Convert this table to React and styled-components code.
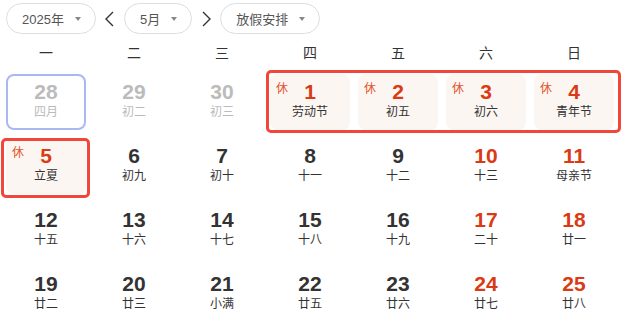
import React from "react"
import styled, { createGlobalStyle } from "styled-components"

const GlobalStyle = createGlobalStyle`
  body {
    margin: 0;
    background: #fff;
    font-family: "Liberation Sans", "Noto Sans CJK SC", sans-serif;
    color: #333;
  }
`

const Page = styled.div`
  width: 626px;
  height: 321px;
  overflow: hidden;
`

const Toolbar = styled.div`
  display: flex;
  align-items: center;
  gap: 7px;
  height: 31px;
  padding: 3px 0 0 6px;
`

const Pill = styled.button`
  display: flex;
  align-items: center;
  gap: 11px;
  height: 31px;
  padding: 0 14px 0 15px;
  border: 1px solid #dedede;
  border-radius: 16px;
  background: #fff;
  color: #555;
  font-family: inherit;
  font-size: 13px;
  cursor: pointer;
`

const Caret = styled.span`
  width: 0;
  height: 0;
  border-left: 3.5px solid transparent;
  border-right: 3.5px solid transparent;
  border-top: 4px solid #888;
`

const Arrow = styled.button`
  display: flex;
  align-items: center;
  justify-content: center;
  width: 14px;
  height: 31px;
  padding: 0;
  border: 0 none;
  background: none;
  cursor: pointer;
`

const WeekHeader = styled.div`
  display: grid;
  grid-template-columns: repeat(7, 88px);
  align-content: start;
  padding: 6px 0 0 2px;
  height: 36px;
  box-sizing: border-box;
  font-size: 14px;
  line-height: 26px;
  text-align: center;
  color: #333;
`

const WeekRow = styled.div`
  display: grid;
  grid-template-columns: repeat(7, 88px);
  padding-left: 2px;
`

const HolidayRun = styled.div`
  grid-column: span ${(p) => p.$span};
  display: grid;
  grid-template-columns: repeat(${(p) => p.$span}, 88px);
  position: relative;

  &::after {
    content: "";
    position: absolute;
    top: ${(p) => p.$inset[0]}px;
    right: ${(p) => p.$inset[1]}px;
    bottom: ${(p) => p.$inset[2]}px;
    left: ${(p) => p.$inset[3]}px;
    border: 3px solid #f1473b;
    border-radius: 5px;
    pointer-events: none;
  }
`

const Cell = styled.div`
  width: 88px;
  height: 64px;
  padding: 4px;
  box-sizing: border-box;
`

const CellBox = styled.div`
  position: relative;
  height: 100%;
  box-sizing: border-box;
  display: flex;
  flex-direction: column;
  align-items: center;
  padding-top: 4px;
  border-radius: 8px;
  border: 2px solid ${(p) => (p.$selected ? "#aab8f2" : "transparent")};
  background: ${(p) => (p.$off ? "#fcf6f2" : "transparent")};
`

const DayNum = styled.div`
  font-size: 21px;
  font-weight: 700;
  line-height: 24px;
  color: ${(p) => (p.$muted ? "#bbb" : p.$red ? "#da3a14" : "#333")};
`

const Lunar = styled.div`
  font-size: 12px;
  line-height: 16px;
  color: ${(p) => (p.$muted ? "#bbb" : "#333")};
`

const OffTag = styled.span`
  position: absolute;
  top: 6px;
  left: 4px;
  font-size: 12px;
  line-height: 14px;
  color: #e4532a;
`

const weekdays = ["一", "二", "三", "四", "五", "六", "日"]

const weeks = [
  {
    frame: [0, -3, 1, 0],
    days: [
      { d: 28, l: "四月", muted: true, selected: true },
      { d: 29, l: "初二", muted: true },
      { d: 30, l: "初三", muted: true },
      { d: 1, l: "劳动节", off: true },
      { d: 2, l: "初五", off: true },
      { d: 3, l: "初六", off: true },
      { d: 4, l: "青年节", off: true },
    ],
  },
  {
    frame: [4, 0, 0, -1],
    days: [
      { d: 5, l: "立夏", off: true },
      { d: 6, l: "初九" },
      { d: 7, l: "初十" },
      { d: 8, l: "十一" },
      { d: 9, l: "十二" },
      { d: 10, l: "十三" },
      { d: 11, l: "母亲节" },
    ],
  },
  {
    days: [
      { d: 12, l: "十五" },
      { d: 13, l: "十六" },
      { d: 14, l: "十七" },
      { d: 15, l: "十八" },
      { d: 16, l: "十九" },
      { d: 17, l: "二十" },
      { d: 18, l: "廿一" },
    ],
  },
  {
    days: [
      { d: 19, l: "廿二" },
      { d: 20, l: "廿三" },
      { d: 21, l: "小满" },
      { d: 22, l: "廿五" },
      { d: 23, l: "廿六" },
      { d: 24, l: "廿七" },
      { d: 25, l: "廿八" },
    ],
  },
]

const Chevron = ({ dir }) => (
  <svg width="11" height="16" viewBox="0 0 11 16">
    <path
      d={dir === "left" ? "M9 1 L2 8 L9 15" : "M2 1 L9 8 L2 15"}
      fill="none"
      stroke="#333"
      strokeWidth="1.4"
    />
  </svg>
)

const Day = ({ day, col }) => {
  const red = day.off || col >= 5
  return (
    <Cell>
      <CellBox $off={day.off} $selected={day.selected}>
        {day.off && <OffTag>休</OffTag>}
        <DayNum $muted={day.muted} $red={red}>
          {day.d}
        </DayNum>
        <Lunar $muted={day.muted}>{day.l}</Lunar>
      </CellBox>
    </Cell>
  )
}

// split a week into runs so that consecutive days off share one red frame
const renderWeek = (week) => {
  const out = []
  let i = 0
  while (i < week.days.length) {
    if (week.days[i].off) {
      const start = i
      while (i < week.days.length && week.days[i].off) i++
      out.push(
        <HolidayRun key={start} $span={i - start} $inset={week.frame}>
          {week.days.slice(start, i).map((day, k) => (
            <Day key={day.d} day={day} col={start + k} />
          ))}
        </HolidayRun>
      )
    } else {
      out.push(<Day key={week.days[i].d} day={week.days[i]} col={i} />)
      i++
    }
  }
  return out
}

export default function App() {
  return (
    <Page>
      <GlobalStyle />
      <Toolbar>
        <Pill type="button">
          2025年<Caret />
        </Pill>
        <Arrow type="button">
          <Chevron dir="left" />
        </Arrow>
        <Pill type="button">
          5月<Caret />
        </Pill>
        <Arrow type="button">
          <Chevron dir="right" />
        </Arrow>
        <Pill type="button">
          放假安排<Caret />
        </Pill>
      </Toolbar>
      <WeekHeader>
        {weekdays.map((w) => (
          <div key={w}>{w}</div>
        ))}
      </WeekHeader>
      {weeks.map((week, idx) => (
        <WeekRow key={idx}>{renderWeek(week)}</WeekRow>
      ))}
    </Page>
  )
}
